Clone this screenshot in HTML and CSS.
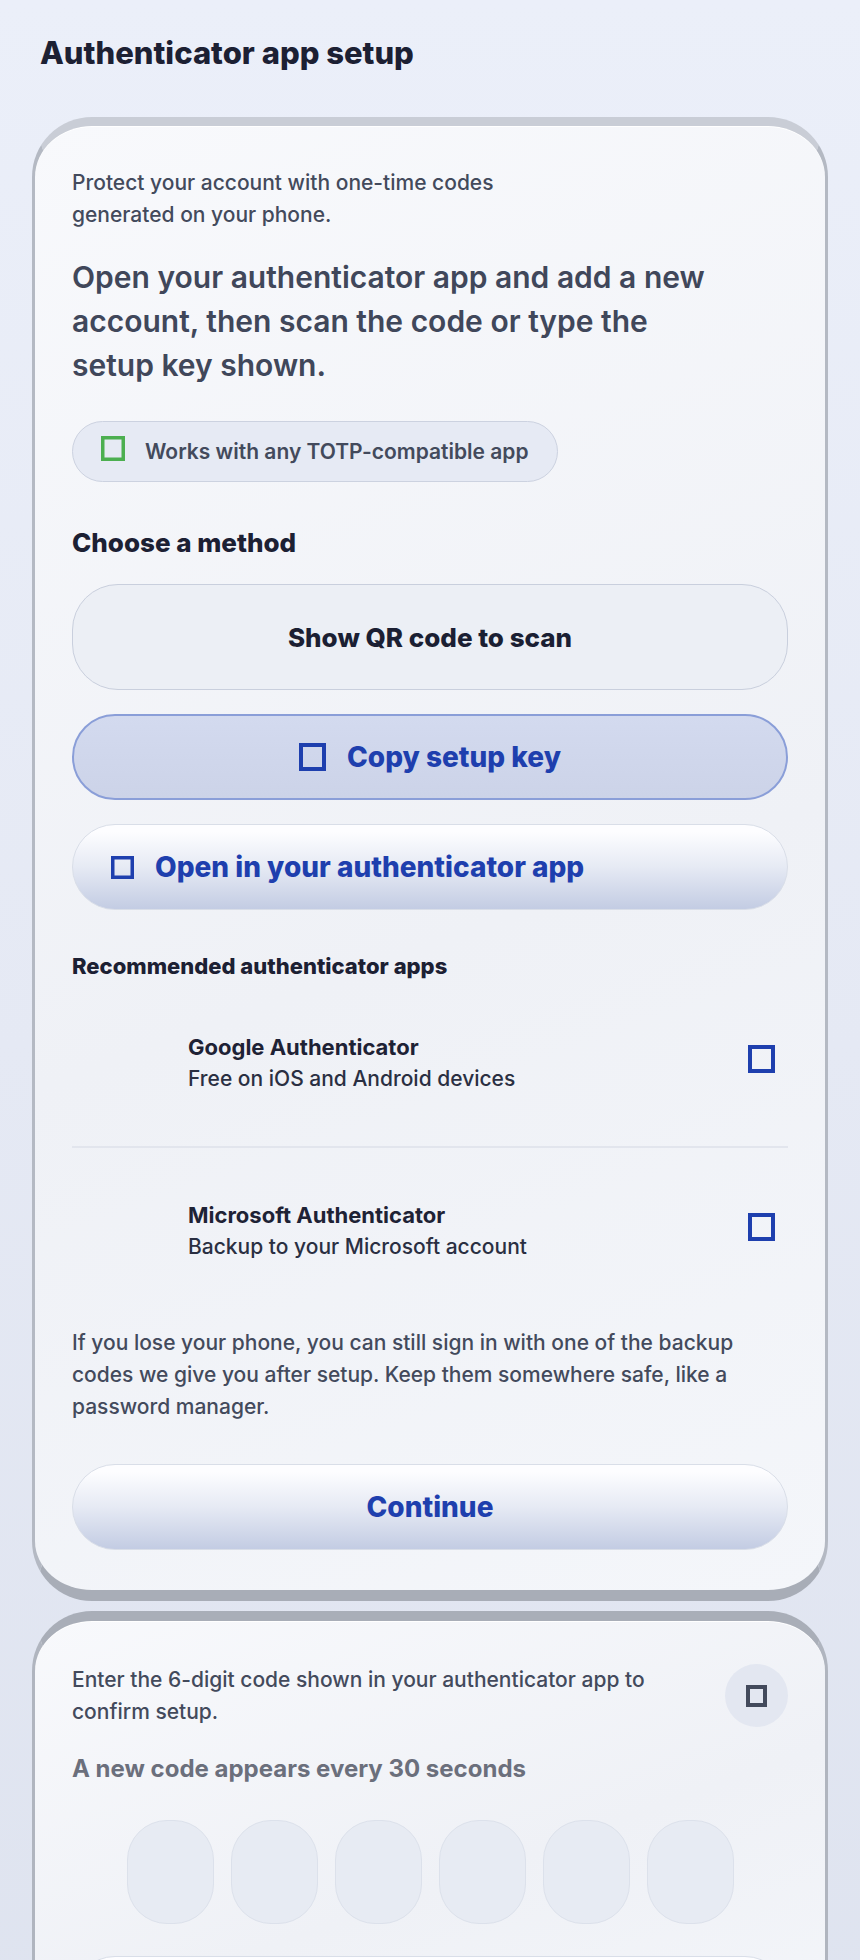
FILE: index.html
```html
<!DOCTYPE html>
<html lang="en">
<head>
<meta charset="utf-8">
<title>Authenticator app setup</title>
<link rel="stylesheet" href="styles.css">
</head>
<body>
<main class="page">
  <h1 class="page-title">Authenticator app setup</h1>

  <section class="card">
    <p class="intro">Protect your account with one-time codes generated on your phone.</p>
    <p class="lead">Open your authenticator app and add a new account, then scan the code or type the setup key shown.</p>

    <div class="badge">
      <svg class="glyph glyph-green" width="24" height="25" viewBox="0 0 24 25" aria-hidden="true"><rect x="1.75" y="1.75" width="20.5" height="21.5" fill="none" stroke="currentColor" stroke-width="3.5"/></svg>
      <span>Works with any TOTP-compatible app</span>
    </div>

    <h2 class="section-title">Choose a method</h2>
    <div class="options">
      <button class="option option-plain" type="button">Show QR code to scan</button>
      <button class="option option-selected" type="button">
        <svg class="glyph" width="27" height="28" viewBox="0 0 27 28" aria-hidden="true"><rect x="2" y="2" width="23" height="24" fill="none" stroke="currentColor" stroke-width="4"/></svg>
        <span>Copy setup key</span>
      </button>
      <button class="option option-raised" type="button">
        <svg class="glyph" width="23" height="23" viewBox="0 0 23 23" aria-hidden="true"><rect x="1.75" y="1.75" width="19.5" height="19.5" fill="none" stroke="currentColor" stroke-width="3.5"/></svg>
        <span>Open in your authenticator app</span>
      </button>
    </div>

    <h3 class="subsection-title">Recommended authenticator apps</h3>
    <ul class="app-list">
      <li class="app-row">
        <div class="app-logo"></div>
        <div class="app-info">
          <span class="app-name">Google Authenticator</span>
          <span class="app-meta">Free on iOS and Android devices</span>
        </div>
        <span class="app-action">
          <svg class="glyph" width="27" height="28" viewBox="0 0 27 28" aria-hidden="true"><rect x="2" y="2" width="23" height="24" fill="none" stroke="currentColor" stroke-width="4"/></svg>
        </span>
      </li>
      <li class="app-row">
        <div class="app-logo"></div>
        <div class="app-info">
          <span class="app-name">Microsoft Authenticator</span>
          <span class="app-meta">Backup to your Microsoft account</span>
        </div>
        <span class="app-action">
          <svg class="glyph" width="27" height="28" viewBox="0 0 27 28" aria-hidden="true"><rect x="2" y="2" width="23" height="24" fill="none" stroke="currentColor" stroke-width="4"/></svg>
        </span>
      </li>
    </ul>

    <p class="note">If you lose your phone, you can still sign in with one of the backup codes we give you after setup. Keep them somewhere safe, like a password manager.</p>

    <button class="primary-btn" type="button">Continue</button>
  </section>

  <section class="card card-verify">
    <div class="verify-head">
      <p class="verify-text">Enter the 6-digit code shown in your authenticator app to confirm setup.</p>
      <button class="icon-btn" type="button" aria-label="Help">
        <svg class="glyph" width="21" height="22" viewBox="0 0 21 22" aria-hidden="true"><rect x="2" y="2" width="17" height="18" fill="none" stroke="currentColor" stroke-width="4"/></svg>
      </button>
    </div>
    <p class="verify-hint">A new code appears every 30 seconds</p>
    <div class="otp">
      <input class="otp-cell" inputmode="numeric" maxlength="1" aria-label="Digit 1">
      <input class="otp-cell" inputmode="numeric" maxlength="1" aria-label="Digit 2">
      <input class="otp-cell" inputmode="numeric" maxlength="1" aria-label="Digit 3">
      <input class="otp-cell" inputmode="numeric" maxlength="1" aria-label="Digit 4">
      <input class="otp-cell" inputmode="numeric" maxlength="1" aria-label="Digit 5">
      <input class="otp-cell" inputmode="numeric" maxlength="1" aria-label="Digit 6">
    </div>
    <button class="primary-btn primary-btn-verify" type="button" aria-label="Verify"></button>
  </section>
</main>
</body>
</html>
```
FILE: styles.css
```css
* { box-sizing: border-box; }

html, body { margin: 0; }

body {
  font-family: Inter, "Noto Sans", "Liberation Sans", sans-serif;
  color: #1c2033;
  background: linear-gradient(180deg, #ebeff9 0%, #e5e9f4 50%, #dee3ef 100%);
  min-height: 1960px;
}

.page {
  padding: 34px 32px 0;
}

.page-title {
  margin: 0 0 0 8px;
  font-size: 31px;
  line-height: 38px;
  font-weight: 800;
  color: #1c2033;
}

.card {
  margin-top: 45px;
  border-style: solid;
  border-width: 9px 3px 11px;
  border-color: #c9cdd6 #b4b9c3 #a8adb7;
  border-radius: 60px;
  background: linear-gradient(160deg, #f8f9fc 0%, #eff1f6 55%, #f4f6fa 100%);
  box-shadow: inset 0 1px 0 #ffffff;
  padding: 41px 37px 40px;
}

.intro {
  margin: 0;
  max-width: 470px;
  font-size: 21px;
  line-height: 32px;
  font-weight: 500;
  color: #434a5c;
}

.lead {
  margin: 24px 0 0;
  max-width: 650px;
  font-size: 30px;
  line-height: 44px;
  font-weight: 600;
  color: #40475a;
}

.badge {
  margin-top: 34px;
  display: flex;
  width: fit-content;
  align-items: center;
  gap: 20px;
  height: 61px;
  padding: 0 28px;
  border-radius: 31px;
  background: #e6eaf4;
  border: 1.5px solid #ccd2e0;
  font-size: 21px;
  font-weight: 600;
  color: #434a5c;
}

.glyph { display: block; flex: none; }
.glyph-green { color: #4caf50; transform: translateY(-3px); }

.section-title {
  margin: 45px 0 0;
  font-size: 26px;
  line-height: 32px;
  font-weight: 800;
  color: #1c2033;
}

.options {
  margin-top: 25px;
  display: flex;
  flex-direction: column;
  gap: 24px;
}

.option {
  font-family: inherit;
  margin: 0;
  width: 100%;
  height: 86px;
  border-radius: 43px;
  display: flex;
  align-items: center;
  font-size: 28px;
  font-weight: 800;
  cursor: pointer;
}

.option-plain {
  height: 106px;
  border-radius: 46px;
  justify-content: center;
  background: #eceff5;
  border: 1.5px solid #c9cfdd;
  font-size: 26px;
  color: #1b1f33;
}

.option-selected {
  justify-content: center;
  gap: 21px;
  background: linear-gradient(180deg, #d3daef 0%, #ccd3e8 100%);
  border: 2px solid #8a9ed8;
  color: #1e3fae;
}

.option-raised {
  gap: 21px;
  padding: 0 0 0 38px;
  background: linear-gradient(180deg, #fdfdff 8%, #e6eaf4 50%, #c3cce3 100%);
  border: 1.5px solid #d9dee8;
  color: #1e3fae;
}

.subsection-title {
  margin: 42px 0 0;
  font-size: 22px;
  line-height: 28px;
  font-weight: 800;
  color: #1c2033;
}

.app-list {
  list-style: none;
  margin: 0;
  padding: 0;
}

.app-row {
  display: flex;
  align-items: center;
  gap: 24px;
  height: 166px;
}

.app-row + .app-row {
  height: 168px;
  border-top: 2px solid #e2e5ed;
}

.app-logo {
  width: 92px;
  height: 92px;
  flex: none;
}

.app-info {
  flex: 1;
  display: flex;
  flex-direction: column;
  gap: 2px;
}

.app-name {
  font-size: 22px;
  line-height: 30px;
  font-weight: 700;
  color: #1e2235;
}

.app-meta {
  font-size: 21px;
  line-height: 30px;
  font-weight: 500;
  color: #2a2f42;
}

.app-action {
  width: 53px;
  flex: none;
  display: flex;
  justify-content: center;
  color: #1e3fae;
  transform: translateY(-4px);
}

.note {
  margin: 13px 0 0;
  font-size: 21px;
  line-height: 32px;
  font-weight: 500;
  color: #434a5c;
}

.primary-btn {
  font-family: inherit;
  display: block;
  margin-top: 41px;
  width: 100%;
  height: 86px;
  border-radius: 43px;
  background: linear-gradient(180deg, #fdfdff 8%, #e6eaf4 50%, #c3cce3 100%);
  border: 1.5px solid #d9dee8;
  color: #1e3fae;
  font-size: 28px;
  font-weight: 800;
  cursor: pointer;
}

.card-verify {
  margin-top: 10px;
  border-width: 10px 3px 11px;
  border-color: #a9aeb8 #b0b5bf #a8adb7;
  padding-top: 43px;
}

.verify-head {
  display: flex;
  align-items: flex-start;
  gap: 20px;
}

.verify-text {
  margin: 0;
  flex: 1;
  font-size: 21px;
  line-height: 32px;
  font-weight: 500;
  color: #434a5c;
}

.icon-btn {
  flex: none;
  width: 63px;
  height: 63px;
  border-radius: 50%;
  border: 0;
  padding: 0;
  background: #e3e7f1;
  color: #434a5c;
  display: flex;
  align-items: center;
  justify-content: center;
}

.verify-hint {
  margin: 25px 0 0;
  font-size: 24px;
  line-height: 32px;
  font-weight: 700;
  color: #6b6f7c;
}

.otp {
  margin-top: 35px;
  display: flex;
  justify-content: center;
  gap: 17px;
}

.otp-cell {
  width: 87px;
  height: 104px;
  border-radius: 40px;
  background: #e7ebf3;
  border: 1.5px solid #dce1eb;
  font-family: inherit;
  font-size: 36px;
  font-weight: 700;
  text-align: center;
  color: #1c2033;
  padding: 0;
  outline: none;
}

.primary-btn-verify {
  margin-top: 32px;
}
```
